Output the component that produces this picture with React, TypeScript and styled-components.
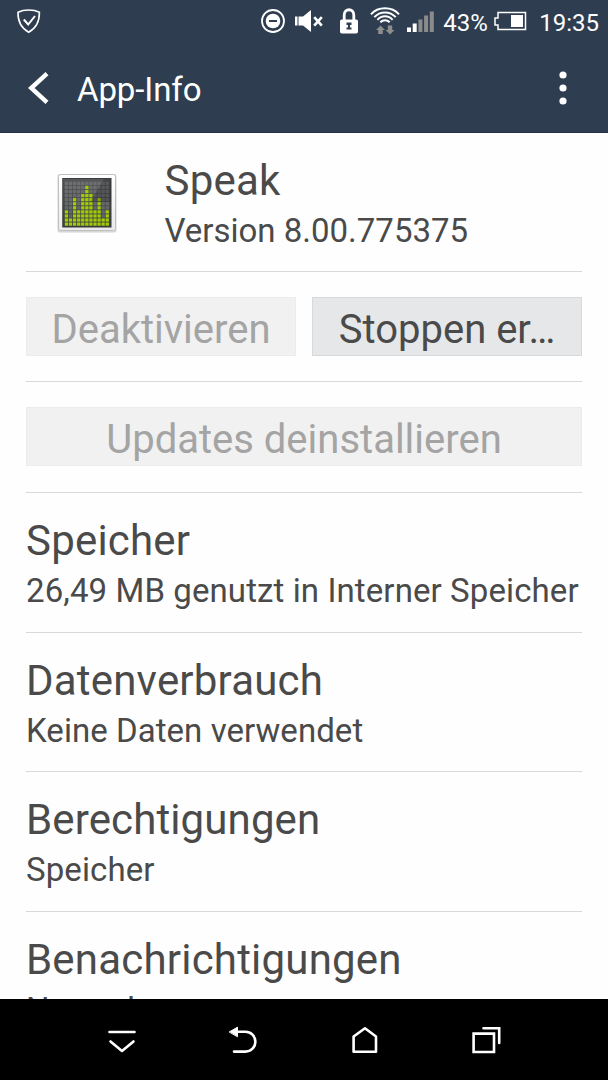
import React from 'react';
import styled, { createGlobalStyle } from 'styled-components';

const GlobalStyle = createGlobalStyle`
  * { box-sizing: border-box; }
  body { margin: 0; background: #fff; font-family: Roboto, sans-serif; color: #4a4a4a; }
`;

const Screen = styled.div`
  width: 608px;
  height: 1080px;
  display: flex;
  flex-direction: column;
  overflow: hidden;
  background: #fefefe;
`;

const Top = styled.header`
  flex: none;
  height: 133px;
  background: #2e3e50;
  border-bottom: 1px solid #24334a;
  color: #fff;
`;

const StatusBar = styled.div`
  height: 42px;
  display: flex;
  align-items: center;
  padding: 0 9px 0 16px;
`;

const StatusIcons = styled.div`
  margin-left: auto;
  display: flex;
  align-items: center;
`;

const StatusText = styled.span<{ $ml: number; $ls: number }>`
  font-size: 24px;
  line-height: 40px;
  margin-top: 3px;
  margin-left: ${p => p.$ml}px;
  letter-spacing: ${p => p.$ls}px;
`;

const ActionBar = styled.div`
  height: 90px;
  display: flex;
  align-items: center;
  padding: 1px 39px 0 28px;
`;

const Title = styled.h1`
  margin: 5px 0 0 28px;
  flex: 1;
  font-size: 33px;
  font-weight: 400;
  line-height: 40px;
  letter-spacing: -0.1px;
`;

const Content = styled.main`
  flex: none;
  height: 866px;
  overflow: hidden;
  padding: 0 26px;
`;

const AppRow = styled.section`
  display: flex;
  height: 138.5px;
  padding-left: 30px;
  border-bottom: 1px solid #d8d8d8;
`;

const AppText = styled.div`
  margin-left: 46.5px;
  padding-top: 23px;
`;

const IconSlot = styled.div`
  padding-top: 39px;
  width: 62px;
`;

const Heading = styled.h2<{ $ls?: number }>`
  margin: 0;
  font-size: 42px;
  font-weight: 400;
  line-height: 50px;
  letter-spacing: ${p => p.$ls ?? 0.2}px;
  white-space: nowrap;
`;

const Sub = styled.p<{ $ls?: number }>`
  margin: 5px 0 0;
  font-size: 33px;
  line-height: 40px;
  letter-spacing: ${p => p.$ls ?? 0.1}px;
  white-space: nowrap;
`;

const ButtonRow = styled.section<{ $h: number }>`
  display: flex;
  gap: 16px;
  height: ${p => p.$h}px;
  padding-top: 25.8px;
  border-bottom: 1px solid #d8d8d8;
`;

const Button = styled.button`
  flex: 1;
  height: 59px;
  padding: 6px 0 0;
  border: 1px solid #d8d9da;
  background: #e6e7e9;
  color: #4a4a4a;
  font: 400 40px/51px Roboto, sans-serif;
  white-space: nowrap;
  &:disabled {
    border-color: #ececec;
    background: #f1f1f1;
    color: #a4a4a4;
  }
`;

const Section = styled.section`
  height: 139.6px;
  padding-top: 23px;
  border-bottom: 1px solid #d8d8d8;
`;

const NavBar = styled.nav`
  flex: 1;
  background: #000;
  display: flex;
  align-items: center;
  justify-content: space-between;
  padding: 0 107px;
`;

const Gap = styled.i<{ $w: number }>`
  width: ${p => p.$w}px;
`;

const levels = [4, 2, 7, 4, 8, 10, 8, 4, 7, 2, 4];

const EqualizerSvg = styled.svg`
  display: block;
`;

const Equalizer = () => (
  <EqualizerSvg width="62" height="62" viewBox="0 0 62 62">
    <defs>
      <linearGradient id="panel" x1="0" y1="0" x2="0" y2="1">
        <stop offset="0" stopColor="#58595b" />
        <stop offset="1" stopColor="#3c3d3f" />
      </linearGradient>
      <linearGradient id="frame" x1="0" y1="0" x2="0" y2="1">
        <stop offset="0" stopColor="#ffffff" />
        <stop offset="1" stopColor="#e9e9ea" />
      </linearGradient>
    </defs>
    <rect x="1.5" y="2" width="59" height="58.5" rx="2" fill="#bdbdbd" opacity=".6" />
    <rect x="2.5" y="2.5" width="57" height="56" rx="2" fill="url(#frame)" stroke="#bfc0c1" />
    <rect x="6.8" y="6.5" width="48.2" height="48.5" fill="url(#panel)" stroke="#3a3b3d" />
    {levels.map((n, c) =>
      Array.from({ length: 11 }, (_, r) => (
        <rect
          key={`${c}-${r}`}
          x={8.8 + c * 4.08}
          y={50.5 - r * 4.07}
          width="3.3"
          height="3.2"
          fill={r < n ? '#a1cc08' : '#85878a'}
          opacity={r < n ? 1 : 0.5}
        />
      )),
    )}
    <path d="M48 7H55V30H34Z" fill="#000" opacity=".2" />
  </EqualizerSvg>
);

const Shield = () => (
  <svg width="26" height="26" viewBox="0 0 26 26" fill="none" stroke="#fff" strokeWidth="1.6">
    <path d="M12.7 2C9 2 5 2.8 2 4.3C1.8 12 4 19.5 12.7 24.2C21.5 19.5 23.5 12 23.4 4.3C20.5 2.8 16.5 2 12.7 2Z" />
    <path d="M7.8 11.5L12.2 16.5L19 8" strokeWidth="2" />
  </svg>
);

const Dnd = () => (
  <svg width="24" height="24" viewBox="0 0 24 24">
    <circle cx="12" cy="12" r="11" fill="none" stroke="#fff" strokeWidth="1.8" />
    <circle cx="12" cy="12" r="7.3" fill="#fff" />
    <path d="M8 12H16" stroke="#2e3e50" strokeWidth="2" />
  </svg>
);

const Muted = () => (
  <svg width="28" height="24" viewBox="0 0 28 24" fill="#fff">
    <path d="M0 7.5H2.5V16.5H0ZM3.5 7.5H8L16 1V23L8 16.5H3.5Z" />
    <path d="M19.2 8.2L26.8 16.6M26.8 8.2L19.2 16.6" stroke="#fff" strokeWidth="2.6" />
  </svg>
);

const Lock = () => (
  <svg width="18" height="26" viewBox="0 0 18 26">
    <path d="M4.2 12V7C4.2 0 13.8 0 13.8 7V12" fill="none" stroke="#fff" strokeWidth="2.8" />
    <rect x="0" y="11.5" width="18" height="14" rx="1.8" fill="#fff" />
    <path d="M6.5 14.5H11.5V17H10V19.500H11.5V21.5H6.5V19.5H8V17H6.5Z" fill="#2e3e50" />
  </svg>
);

const Wifi = () => (
  <svg width="30" height="28" viewBox="0 0 30 28">
    <g fill="none" stroke="#fff" strokeWidth="2">
      <path d="M1 7.3C8 -0.7 22 -0.7 29 7.3" />
      <path d="M4.300 10.2C10 3.8 20 3.8 25.700 10.2" />
      <path d="M7.4 12.8C11.500 8.200 18.500 8.200 22.6 12.8" />
      <path d="M10.3 15.3C13 12.4 17 12.4 19.7 15.3" />
    </g>
    <path d="M10.5 18.5L15 23H12.8V27H8.2V23H6ZM17.8 18.5H22.2V23H24.5L20 27.5L15.5 23H17.8Z" fill="#8d8d8d" />
  </svg>
);

const Signal = () => (
  <svg width="27" height="22" viewBox="0 0 27 22">
    <path d="M0 17.5H4V22H0ZM5.7 13.5H9.7V22H5.7Z" fill="#fff" />
    <path d="M11.4 9.5H15.4V22H11.4ZM17.1 5.5H21.1V22H17.1ZM22.8 1.5H26.8V22H22.8Z" fill="#8b8b8b" />
  </svg>
);

const Battery = () => (
  <svg width="33" height="20" viewBox="0 0 33 20">
    <path d="M4 1.5H31.5V18.5H4V14H1V7H4Z" fill="none" stroke="#fff" strokeWidth="1.5" />
    <rect x="17" y="4" width="12" height="12" fill="#fff" />
  </svg>
);

const Back = () => (
  <svg width="21" height="32" viewBox="0 0 21 32" fill="none" stroke="#fff" strokeWidth="4.4">
    <path d="M19 1.7L3.2 16L19 30.3" />
  </svg>
);

const More = () => (
  <svg width="12" height="36" viewBox="0 0 12 36" fill="#fff">
    <circle cx="6" cy="5" r="3.6" />
    <circle cx="6" cy="18" r="3.6" />
    <circle cx="6" cy="31" r="3.6" />
  </svg>
);

const NavIcon = ({ children }: { children: React.ReactNode }) => (
  <svg width="30" height="30" viewBox="0 0 30 30" fill="none" stroke="#fff" strokeWidth="2.6" strokeLinecap="round" strokeLinejoin="round">
    {children}
  </svg>
);

export default function App() {
  return (
    <Screen>
      <GlobalStyle />
      <Top>
        <StatusBar>
          <Shield />
          <StatusIcons>
            <Dnd />
            <Gap $w={10} />
            <Muted />
            <Gap $w={17} />
            <Lock />
            <Gap $w={12} />
            <Wifi />
            <Gap $w={6.5} />
            <Signal />
            <StatusText $ml={9.5} $ls={0}>43%</StatusText>
            <Gap $w={6.5} />
            <Battery />
            <StatusText $ml={12} $ls={0}>19:35</StatusText>
          </StatusIcons>
        </StatusBar>
        <ActionBar>
          <Back />
          <Title>App-Info</Title>
          <More />
        </ActionBar>
      </Top>
      <Content>
        <AppRow>
          <IconSlot><Equalizer /></IconSlot>
          <AppText>
            <Heading>Speak</Heading>
            <Sub $ls={0}>Version 8.00.775375</Sub>
          </AppText>
        </AppRow>
        <ButtonRow $h={110}>
          <Button disabled>Deaktivieren</Button>
          <Button>Stoppen er…</Button>
        </ButtonRow>
        <ButtonRow $h={111.5}>
          <Button disabled>Updates deinstallieren</Button>
        </ButtonRow>
        <Section>
          <Heading>Speicher</Heading>
          <Sub>26,49 MB genutzt in Interner Speicher</Sub>
        </Section>
        <Section>
          <Heading>Datenverbrauch</Heading>
          <Sub $ls={0.05}>Keine Daten verwendet</Sub>
        </Section>
        <Section>
          <Heading $ls={0.12}>Berechtigungen</Heading>
          <Sub>Speicher</Sub>
        </Section>
        <Section>
          <Heading>Benachrichtigungen</Heading>
          <Sub>Normal</Sub>
        </Section>
      </Content>
      <NavBar>
        <NavIcon><path d="M2.500 7H27.500M3.500 16.500L15 26L26.500 16.500" /></NavIcon>
        <NavIcon>
          <path d="M9 6.800H17.500a9.900 9.900 0 0 1 0 19.800H6" />
          <path d="M1.500 6.800L9.500 2.200V11.400Z" fill="#fff" strokeWidth="1" />
        </NavIcon>
        <NavIcon><path d="M3.600 11.500L15 3.300L26 11.500V26.700H3.600Z" /></NavIcon>
        <NavIcon><path d="M2.600 8.600H23V27H2.600ZM12.500 3.300H28.200V18" strokeLinejoin="miter" /></NavIcon>
      </NavBar>
    </Screen>
  );
}
